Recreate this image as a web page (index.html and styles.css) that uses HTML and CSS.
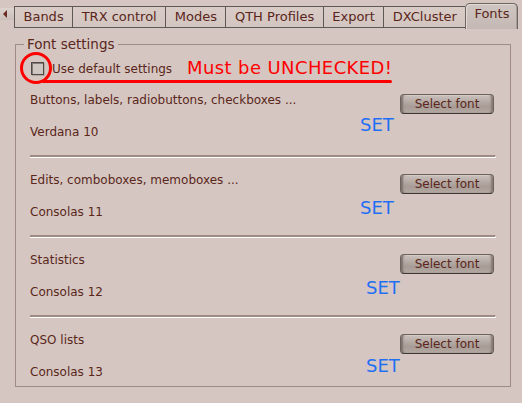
FILE: index.html
```html
<!DOCTYPE html>
<html>
<head>
<meta charset="utf-8">
<link rel="stylesheet" href="styles.css">
</head>
<body>
<div class="window">
  <div class="tabbar">
    <div class="scroll-left"><span class="tri"></span></div>
    <div class="tab">Bands</div>
    <div class="tab">TRX control</div>
    <div class="tab">Modes</div>
    <div class="tab">QTH Profiles</div>
    <div class="tab">Export</div>
    <div class="tab">DXCluster</div>
    <div class="tab active">Fonts</div>
  </div>

  <fieldset class="group">
    <legend class="legend">Font settings</legend>
    <div class="check-row">
      <span class="checkbox"></span>
      <span class="check-label">Use default settings</span>
    </div>

    <div class="section">
      <div class="sec-head">
        <span class="sec-label">Buttons, labels, radiobuttons, checkboxes ...</span>
        <button class="btn">Select font</button>
      </div>
      <div class="font-name">Verdana 10</div>
      <span class="set set-1">SET</span>
    </div>
    <div class="sep"></div>

    <div class="section">
      <div class="sec-head">
        <span class="sec-label">Edits, comboboxes, memoboxes ...</span>
        <button class="btn">Select font</button>
      </div>
      <div class="font-name">Consolas 11</div>
      <span class="set set-2">SET</span>
    </div>
    <div class="sep"></div>

    <div class="section">
      <div class="sec-head">
        <span class="sec-label">Statistics</span>
        <button class="btn">Select font</button>
      </div>
      <div class="font-name">Consolas 12</div>
      <span class="set set-3">SET</span>
    </div>
    <div class="sep"></div>

    <div class="section">
      <div class="sec-head">
        <span class="sec-label">QSO lists</span>
        <button class="btn">Select font</button>
      </div>
      <div class="font-name">Consolas 13</div>
      <span class="set set-4">SET</span>
    </div>
  </fieldset>

  <div class="mark-circle"></div>
  <div class="mark-line"></div>
  <div class="mark-text">Must be UNCHECKED!</div>
</div>
</body>
</html>
```

FILE: styles.css
```css
html, body {
  margin: 0;
  padding: 0;
  background: #d5c6c1;
}

body {
  font-family: "DejaVu Sans", Verdana, sans-serif;
  font-size: 12px;
  color: #5a261b;
}

.window {
  position: relative;
  width: 522px;
  height: 403px;
  overflow: hidden;
}

/* ---------- tabs ---------- */
.tabbar {
  display: flex;
  align-items: flex-end;
  height: 28px;
}

.scroll-left {
  width: 14px;
  height: 12px;
  align-self: flex-start;
  margin-top: 8px;
  background: linear-gradient(to bottom, #dcd2ce, #cbbfba);
  position: relative;
}

.tri {
  position: absolute;
  left: 3px;
  top: 2px;
  width: 0;
  height: 0;
  border-top: 4px solid transparent;
  border-bottom: 4px solid transparent;
  border-right: 4px solid #6a2a20;
}

.tab {
  box-sizing: border-box;
  height: 22px;
  margin-bottom: 0;
  padding: 1px 8.5px 0;
  font-size: 13px;
  line-height: 18px;
  border-top: 1px solid #5f5956;
  border-left: 1px solid #5f5956;
  border-bottom: 1px solid #5f5956;
  background: linear-gradient(to bottom, #d9ccc7, #d3c5c0);
  white-space: nowrap;
}

.tab.active {
  height: 26px;
  margin-bottom: -1px;
  padding: 2px 8px 0;
  line-height: 16px;
  border: 1px solid #6c6560;
  border-bottom: none;
  border-radius: 5px 5px 0 0;
  background: linear-gradient(to bottom, #d0c6c1, #c8bdb8 60%, #c3b8b3);
  box-shadow: inset 1px 1px 0 #e2dad6, inset -1px 0 0 #a89e99;
}

/* ---------- group box ---------- */
.group {
  box-sizing: border-box;
  width: 496px;
  margin: 8px 0 0 15px;
  padding: 0 14px 7px 14px;
  border: 1px solid #a08c85;
  min-width: 0;
}

.legend {
  margin-left: -6px;
  padding: 0 3px;
  font-size: 13.5px;
  line-height: 16px;
}

.check-row {
  display: flex;
  align-items: flex-start;
  gap: 8px;
  height: 14px;
  margin-top: 10px;
}

.checkbox {
  box-sizing: border-box;
  width: 13px;
  height: 13px;
  margin-left: 1px;
  border: 1px solid #4f4844;
  background: #cfc5c1;
  box-shadow: inset 1px 1px 0 #857a75, 1px 1px 0 #b3a8a3;
}

.check-label {
  line-height: 15px;
}

.section {
  position: relative;
}

.check-row + .section {
  margin-top: 17px;
}

.sec-head {
  display: flex;
  justify-content: space-between;
  align-items: flex-start;
  height: 21px;
}

.sec-label {
  line-height: 14px;
}

.btn {
  box-sizing: border-box;
  width: 94px;
  height: 20px;
  margin: 1px 2px 0 0;
  padding: 0;
  font-family: "DejaVu Sans", Verdana, sans-serif;
  font-size: 12px;
  line-height: 14px;
  color: #5a261b;
  border: 1px solid #6e625d;
  border-bottom-color: #3f3834;
  border-radius: 4px;
  background: linear-gradient(to bottom, #cbc2bd 0%, #b7aca6 35%, #a89b95 65%, #b3a8a2 100%);
  box-shadow: inset 3px 0 2px -1px #7d716b, inset -3px 0 2px -1px #867a74, inset 0 1px 0 #ddd5d1;
}

.font-name {
  margin-top: 11px;
  line-height: 14px;
}

.sep {
  height: 0;
  margin: 16px 0 15px;
  border-top: 2px solid #a08b84;
  border-bottom: 1px solid #ffffff;
  border-right: 1px solid #ffffff;
}

.set {
  position: absolute;
  font-size: 18px;
  line-height: 18px;
  color: #1f6ff5;
}

.set-1 { left: 330px; top: 23px; }
.set-2 { left: 330px; top: 26px; }
.set-3 { left: 336px; top: 26px; }
.set-4 { left: 336px; top: 24px; }

/* ---------- annotations ---------- */
.mark-circle {
  position: absolute;
  left: 20px;
  top: 52px;
  width: 32px;
  height: 32px;
  box-sizing: border-box;
  border: 3px solid #ff0000;
  border-radius: 50%;
}

.mark-line {
  position: absolute;
  left: 42px;
  top: 80px;
  width: 350px;
  height: 3px;
  background: #ff0000;
  border-radius: 2px;
}

.mark-text {
  position: absolute;
  left: 187px;
  top: 59px;
  font-size: 18px;
  line-height: 18px;
  letter-spacing: 0.4px;
  color: #ff0000;
  white-space: nowrap;
}
```
